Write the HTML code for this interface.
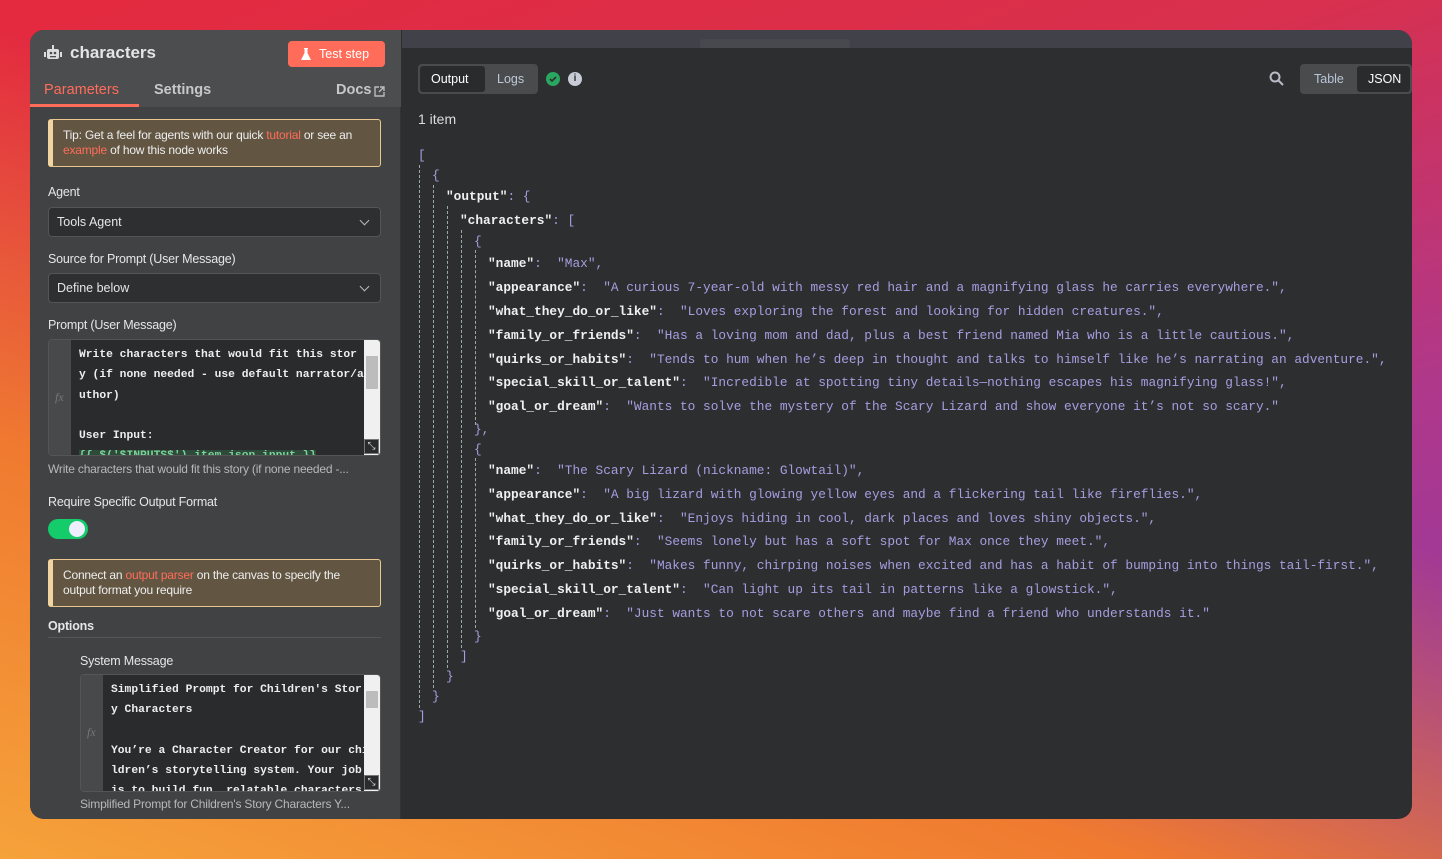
<!DOCTYPE html>
<html><head><meta charset="utf-8"><style>
*{margin:0;padding:0;box-sizing:border-box}
body{width:1442px;height:859px;overflow:hidden;font-family:"Liberation Sans",sans-serif;position:relative;
background:linear-gradient(160deg,#e42a3e 0%,#d8304e 35%,#b0388a 65%,#8a3aa8 100%);}
.bg2{position:absolute;inset:0;background:linear-gradient(20deg,#f5a23a 0%,#f07a30 30%,rgba(240,100,50,0) 60%);}
.win{position:absolute;left:30px;top:30px;width:1382px;height:789px;border-radius:14px;overflow:hidden;background:#2d2e30}
.left{position:absolute;left:0;top:0;width:371px;height:789px;background:#414244;border-right:1px solid #333}
.hdr{position:absolute;left:0;top:0;width:371px;height:77px;background:#4c4d4f}
.abs{position:absolute}
.lbl{position:absolute;left:18px;font-size:12.5px;color:#e6e6e6;letter-spacing:-0.2px}
.sel{position:absolute;left:18px;width:333px;height:30px;background:#2e2f31;border:1px solid #555;border-radius:4px;font-size:12.5px;color:#e6e6e6;padding:7px 8px}
.sel:after{content:"";position:absolute;right:12px;top:9px;width:6px;height:6px;border-right:1.5px solid #bbb;border-bottom:1.5px solid #bbb;transform:rotate(45deg)}
.note{position:absolute;left:18px;width:333px;background:#625643;border:1px solid #e8c88e;border-left:5px solid #f2d4a2;border-radius:3px;font-size:12px;color:#eee;padding:8px 10px;line-height:15px;letter-spacing:-0.2px}
.note b{color:#ff6d5a;font-weight:normal}
.ed{position:absolute;background:#2a2b2d;border:1px solid #555;border-radius:4px;overflow:hidden}
.ed .g{position:absolute;left:0;top:0;bottom:0;width:22px;background:#48494b;color:#777;font-style:italic;font-family:"Liberation Serif",serif;font-size:12px}
.ed pre{position:absolute;left:30px;top:5px;font-family:"Liberation Mono",monospace;font-size:11.3px;line-height:20.3px;color:#eee;white-space:pre;font-weight:bold}
.ed .sb{position:absolute;right:0;top:0;bottom:0;width:16px;background:#f0f0f0}
.ed .th{position:absolute;right:2px;top:16px;width:12px;height:33px;background:#bcbcbc}
.ed .rs{position:absolute;right:1px;bottom:1px;width:15px;height:15px;background:#2a2b2d;border:1px solid #777;color:#ddd;font-size:10px;line-height:13px;text-align:center}
.hint{position:absolute;left:18px;font-size:12px;color:#b8b8b8;letter-spacing:-0.2px}
.top{position:absolute;left:372px;top:0;width:1010px;height:18px;background:#414149}
.j{position:absolute;font-family:"Liberation Mono",monospace;font-size:12.8px;white-space:pre;color:#a89ce0}
.j .k{color:#f0f0f0;font-weight:bold}
.gl{position:absolute;width:0;border-left:1px dashed #9aa;}
</style></head><body><div class="bg2"></div>
<div class="win">
<div class="left">
<div class="hdr"></div>
<svg class="abs" style="left:14px;top:15px" width="18" height="16" viewBox="0 0 18 16"><rect x="3" y="4" width="12" height="10" rx="2" fill="#ddd"/><rect x="0" y="7" width="2" height="5" fill="#ddd"/><rect x="16" y="7" width="2" height="5" fill="#ddd"/><rect x="8" y="0" width="2" height="4" fill="#ddd"/><circle cx="7" cy="8" r="1.3" fill="#4c4d4f"/><circle cx="11" cy="8" r="1.3" fill="#4c4d4f"/><rect x="6" y="11" width="6" height="1.3" fill="#4c4d4f"/></svg>
<div class="abs" style="left:40px;top:13px;font-size:17px;font-weight:bold;color:#e4e4e4">characters</div>
<div class="abs" style="left:258px;top:11px;width:97px;height:26px;background:#ff6d5a;border-radius:4px;color:#fff;font-size:12.5px;padding:6px 0 0 31px">Test step</div>
<svg class="abs" style="left:271px;top:18px" width="10" height="13" viewBox="0 0 10 13"><path d="M3 0h4v1H6.5v4L10 12H0L3.5 5V1H3z" fill="#fff"/></svg>
<div class="abs" style="left:14px;top:52px;font-size:14.5px;color:#ff6d5a">Parameters</div>
<div class="abs" style="left:0;top:74px;width:109px;height:3px;background:#ff6d5a"></div>
<div class="abs" style="left:124px;top:52px;font-size:14.5px;color:#c8c8cc;font-weight:bold">Settings</div>
<div class="abs" style="left:306px;top:52px;font-size:14.5px;color:#c8c8cc;font-weight:bold">Docs</div>
<svg class="abs" style="left:344px;top:56px" width="11" height="11" viewBox="0 0 11 11" fill="none" stroke="#bbb" stroke-width="1.4"><path d="M5 1H1v9h9V6M6 1h4v4M10 1L5 6"/></svg>
<div class="note" style="top:89px;height:48px">Tip: Get a feel for agents with our quick <b>tutorial</b> or see an <b>example</b> of how this node works</div>
<div class="lbl" style="top:155px">Agent</div>
<div class="sel" style="top:177px">Tools Agent</div>
<div class="lbl" style="top:222px">Source for Prompt (User Message)</div>
<div class="sel" style="top:243px">Define below</div>
<div class="lbl" style="top:288px">Prompt (User Message)</div>
<div class="ed" style="left:18px;top:309px;width:333px;height:117px"><div class="g"><span style="position:absolute;left:6px;top:50px">fx</span></div>
<pre>Write characters that would fit this stor
y (if none needed - use default narrator/a
uthor)

User Input:
<span style="background:#2f4a3a;color:#7ad49a">{{ $('$INPUTS$').item.json.input }}</span></pre>
<div class="sb"><div class="th"></div></div><div class="rs">⤡</div></div>
<div class="hint" style="top:432px">Write characters that would fit this story (if none needed -...</div>
<div class="lbl" style="top:465px">Require Specific Output Format</div>
<div class="abs" style="left:18px;top:489px;width:40px;height:20px;border-radius:10px;background:#14cc6a"><div class="abs" style="left:21px;top:2px;width:16px;height:16px;border-radius:50%;background:#eef"></div></div>
<div class="note" style="top:529px;height:48px">Connect an <b>output parser</b> on the canvas to specify the output format you require</div>
<div class="lbl" style="top:589px;font-weight:bold">Options</div>
<div class="abs" style="left:18px;top:607px;width:333px;height:1px;background:#555"></div>
<div class="lbl" style="left:50px;top:624px">System Message</div>
<div class="ed" style="left:50px;top:644px;width:301px;height:118px"><div class="g"><span style="position:absolute;left:6px;top:50px">fx</span></div>
<pre>Simplified Prompt for Children's Stor
y Characters

You’re a Character Creator for our chi
ldren’s storytelling system. Your job
is to build fun, relatable characters</pre>
<div class="sb"><div class="th" style="height:17px"></div></div><div class="rs">⤡</div></div>
<div class="hint" style="left:50px;top:767px">Simplified Prompt for Children's Story Characters Y...</div>
</div>
<div class="top"><div class="abs" style="left:298px;top:9px;width:150px;height:9px;background:#48484f;border-radius:4px 4px 0 0"></div></div>
<div class="abs" style="left:388px;top:34px;width:120px;height:30px;background:#4a4b4d;border-radius:4px"></div>
<div class="abs" style="left:390px;top:36px;width:65px;height:26px;background:#2a2b2d;border-radius:3px;color:#fff;font-size:12.5px;padding:6px 0 0 11px">Output</div>
<div class="abs" style="left:467px;top:42px;color:#c0c8d8;font-size:12.5px">Logs</div>
<div class="abs" style="left:516px;top:42px;width:14px;height:14px;border-radius:50%;background:#29a660"></div>
<svg class="abs" style="left:519px;top:45px" width="8" height="8" viewBox="0 0 8 8"><path d="M1 4l2 2 4-4" stroke="#2d2e30" stroke-width="1.6" fill="none"/></svg>
<div class="abs" style="left:538px;top:42px;width:14px;height:14px;border-radius:50%;background:#c8ccd6;color:#2d2e30;font-size:10px;font-weight:bold;text-align:center;line-height:14px">i</div>
<svg class="abs" style="left:1239px;top:41px" width="15" height="15" viewBox="0 0 15 15" fill="none" stroke="#b8bcc6" stroke-width="2"><circle cx="6" cy="6" r="4.5"/><path d="M9.5 9.5L14 14"/></svg>
<div class="abs" style="left:1270px;top:34px;width:112px;height:30px;background:#4a4b4d;border-radius:4px"></div>
<div class="abs" style="left:1284px;top:42px;color:#b8c6d8;font-size:12.5px">Table</div>
<div class="abs" style="left:1327px;top:36px;width:53px;height:26px;background:#2a2b2d;border-radius:3px;color:#fff;font-size:12.5px;padding:6px 0 0 11px">JSON</div>
<div class="abs" style="left:388px;top:81px;color:#ddd;font-size:14px">1 item</div>
</div>
<!-- guides -->
<div class="gl" style="left:419px;top:165px;height:543px"></div>
<div class="gl" style="left:433px;top:185px;height:503px"></div>
<div class="gl" style="left:447px;top:206px;height:462px"></div>
<div class="gl" style="left:461px;top:230px;height:418px"></div>
<div class="gl" style="left:475px;top:250px;height:175px"></div>
<div class="gl" style="left:475px;top:458px;height:170px"></div>
<div class="j" style="left:418px;top:148px">[</div>
<div class="j" style="left:432px;top:168px">{</div>
<div class="j" style="left:446px;top:189px"><span class="k">"output"</span>: {</div>
<div class="j" style="left:460px;top:213px"><span class="k">"characters"</span>: [</div>
<div class="j" style="left:474px;top:234px">{</div>
<div class="j" style="left:488px;top:256px"><span class="k">"name"</span>:  "Max",</div>
<div class="j" style="left:488px;top:280px"><span class="k">"appearance"</span>:  "A curious 7-year-old with messy red hair and a magnifying glass he carries everywhere.",</div>
<div class="j" style="left:488px;top:304px"><span class="k">"what_they_do_or_like"</span>:  "Loves exploring the forest and looking for hidden creatures.",</div>
<div class="j" style="left:488px;top:328px"><span class="k">"family_or_friends"</span>:  "Has a loving mom and dad, plus a best friend named Mia who is a little cautious.",</div>
<div class="j" style="left:488px;top:352px"><span class="k">"quirks_or_habits"</span>:  "Tends to hum when he’s deep in thought and talks to himself like he’s narrating an adventure.",</div>
<div class="j" style="left:488px;top:375px"><span class="k">"special_skill_or_talent"</span>:  "Incredible at spotting tiny details—nothing escapes his magnifying glass!",</div>
<div class="j" style="left:488px;top:399px"><span class="k">"goal_or_dream"</span>:  "Wants to solve the mystery of the Scary Lizard and show everyone it’s not so scary."</div>
<div class="j" style="left:474px;top:422px">},</div>
<div class="j" style="left:474px;top:442px">{</div>
<div class="j" style="left:488px;top:463px"><span class="k">"name"</span>:  "The Scary Lizard (nickname: Glowtail)",</div>
<div class="j" style="left:488px;top:487px"><span class="k">"appearance"</span>:  "A big lizard with glowing yellow eyes and a flickering tail like fireflies.",</div>
<div class="j" style="left:488px;top:511px"><span class="k">"what_they_do_or_like"</span>:  "Enjoys hiding in cool, dark places and loves shiny objects.",</div>
<div class="j" style="left:488px;top:534px"><span class="k">"family_or_friends"</span>:  "Seems lonely but has a soft spot for Max once they meet.",</div>
<div class="j" style="left:488px;top:558px"><span class="k">"quirks_or_habits"</span>:  "Makes funny, chirping noises when excited and has a habit of bumping into things tail-first.",</div>
<div class="j" style="left:488px;top:582px"><span class="k">"special_skill_or_talent"</span>:  "Can light up its tail in patterns like a glowstick.",</div>
<div class="j" style="left:488px;top:606px"><span class="k">"goal_or_dream"</span>:  "Just wants to not scare others and maybe find a friend who understands it."</div>
<div class="j" style="left:474px;top:629px">}</div>
<div class="j" style="left:460px;top:649px">]</div>
<div class="j" style="left:446px;top:669px">}</div>
<div class="j" style="left:432px;top:689px">}</div>
<div class="j" style="left:418px;top:709px">]</div>
</body></html>
